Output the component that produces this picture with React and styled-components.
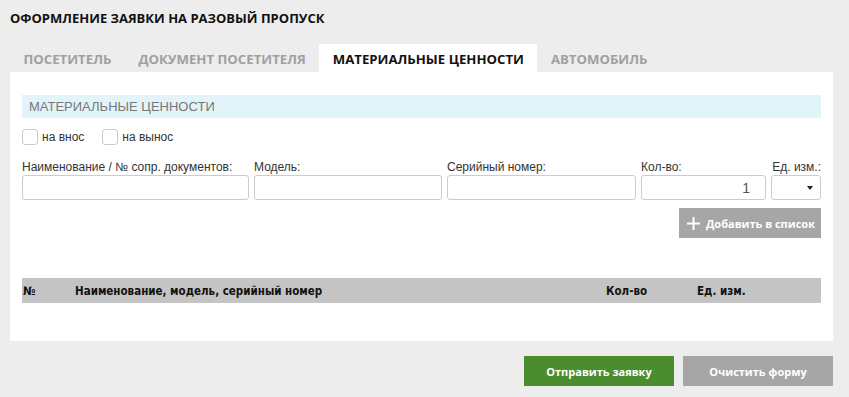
import React, { useState } from "react";
import styled, { createGlobalStyle } from "styled-components";

const Global = createGlobalStyle`
  body {
    margin: 0;
    background: #ededed;
    font-family: "Open Sans", "Liberation Sans", sans-serif;
  }
  * { box-sizing: border-box; }
`;

const Page = styled.div`
  width: 849px;
  height: 397px;
  padding: 0 16px 0 10px;
`;

const Title = styled.h1`
  margin: 0;
  padding-top: 9px;
  height: 44px;
  font-size: 13px;
  font-weight: 700;
  color: #111;
  text-transform: uppercase;
`;

const Tabs = styled.div`
  display: flex;
  height: 28px;
`;

const Tab = styled.div`
  padding: 0 13.5px;
  line-height: 30px;
  font-size: 13.2px;
  font-weight: 700;
  text-transform: uppercase;
  color: ${(p) => (p.$active ? "#111" : "#a0a0a0")};
  background: ${(p) => (p.$active ? "#fff" : "transparent")};
`;

const Panel = styled.div`
  background: #fff;
  height: 269px;
  padding: 23px 12px 0 12px;
`;

const SectionBar = styled.div`
  height: 23px;
  background: #e2f4f9;
  padding-left: 7px;
  line-height: 23px;
  font-family: "Liberation Sans", Arial, sans-serif;
  font-size: 13px;
  color: #777;
  text-transform: uppercase;
`;

const CheckRow = styled.div`
  display: flex;
  gap: 18px;
  margin-top: 10px;
  height: 18px;
  align-items: center;
`;

const Check = styled.label`
  display: flex;
  align-items: center;
  gap: 4px;
  font-family: "Liberation Sans", Arial, sans-serif;
  font-size: 12px;
  color: #333;
`;

const Box = styled.span`
  width: 16px;
  height: 16px;
  border: 1px solid #ccc;
  border-radius: 3px;
  background: #fff;
`;

const FieldRow = styled.div`
  display: grid;
  grid-template-columns: 227px 188px 189px 125px 50px;
  gap: 5px;
  margin-top: 14px;
`;

const Field = styled.div`
  display: flex;
  flex-direction: column;
  align-items: ${(p) => (p.$right ? "flex-end" : "stretch")};
`;

const Label = styled.span`
  font-family: "Liberation Sans", Arial, sans-serif;
  font-size: 12px;
  color: #333;
  height: 15px;
  line-height: 14px;
  white-space: nowrap;
`;

const Input = styled.div`
  width: 100%;
  height: 25px;
  border: 1px solid #ccc;
  border-radius: 3px;
  background: #fff;
  display: flex;
  align-items: center;
  justify-content: flex-end;
  padding-right: ${(p) => (p.$pad || 0)}px;
  font-family: "Liberation Sans", Arial, sans-serif;
  font-size: 14px;
  color: #555;
`;

const Caret = styled.span`
  width: 0;
  height: 0;
  border-left: 3px solid transparent;
  border-right: 3px solid transparent;
  border-top: 4px solid #222;
`;

const AddRow = styled.div`
  display: flex;
  justify-content: flex-end;
  margin-top: 8px;
`;

const GrayButton = styled.button`
  height: 30px;
  border: 0;
  background: #a6a6a6;
  color: #fff;
  font-family: "Open Sans", "Liberation Sans", sans-serif;
  font-weight: 700;
  font-size: 11px;
  display: flex;
  align-items: center;
  gap: 6px;
  padding: 0 6px 0 8px;
`;

const Table = styled.div`
  margin-top: 40px;
`;

const HeadRow = styled.div`
  display: grid;
  grid-template-columns: 52px 531px 91px 1fr;
  height: 25px;
  align-items: center;
  background: #c4c4c4;
  font-family: "DejaVu Sans Condensed", "Liberation Sans", sans-serif;
  font-stretch: condensed;
  font-weight: 700;
  font-size: 11.5px;
  color: #111;
  padding-left: 1px;
`;

const Footer = styled.div`
  display: flex;
  justify-content: flex-end;
  gap: 9px;
  margin-top: 15px;
`;

const BigButton = styled.button`
  width: 150px;
  height: 30px;
  border: 0;
  background: ${(p) => (p.$green ? "#4a8c2e" : "#a6a6a6")};
  color: #fff;
  font-family: "Open Sans", "Liberation Sans", sans-serif;
  font-weight: 700;
  font-size: 11px;
`;

const tabs = ["Посетитель", "Документ посетителя", "Материальные ценности", "Автомобиль"];

export default function App() {
  const [active] = useState(2);
  return (
    <Page>
      <Global />
      <Title>Оформление заявки на разовый пропуск</Title>
      <Tabs>
        {tabs.map((t, i) => (
          <Tab key={t} $active={i === active}>{t}</Tab>
        ))}
      </Tabs>
      <Panel>
        <SectionBar>Материальные ценности</SectionBar>
        <CheckRow>
          <Check><Box />на внос</Check>
          <Check><Box />на вынос</Check>
        </CheckRow>
        <FieldRow>
          <Field><Label>Наименование / № сопр. документов:</Label><Input /></Field>
          <Field><Label>Модель:</Label><Input /></Field>
          <Field><Label>Серийный номер:</Label><Input /></Field>
          <Field><Label>Кол-во:</Label><Input $pad={15}>1</Input></Field>
          <Field $right><Label>Ед. изм.:</Label><Input $pad={7}><Caret /></Input></Field>
        </FieldRow>
        <AddRow>
          <GrayButton>
            <svg width="13" height="13" viewBox="0 0 13 13">
              <path d="M6.5 0v13M0 6.5h13" stroke="#fff" strokeWidth="2" />
            </svg>
            Добавить в список
          </GrayButton>
        </AddRow>
        <Table>
          <HeadRow>
            <span>№</span>
            <span>Наименование, модель, серийный номер</span>
            <span>Кол-во</span>
            <span>Ед. изм.</span>
          </HeadRow>
        </Table>
      </Panel>
      <Footer>
        <BigButton $green>Отправить заявку</BigButton>
        <BigButton>Очистить форму</BigButton>
      </Footer>
    </Page>
  );
}
